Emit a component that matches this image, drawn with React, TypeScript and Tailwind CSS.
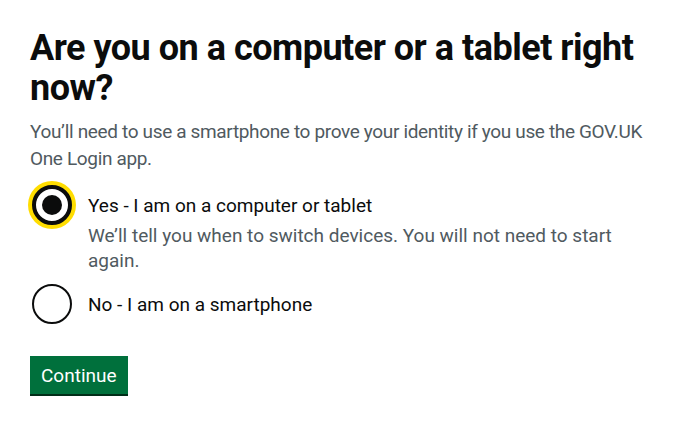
export default function App() {
  return (
    <div className="min-h-screen bg-white text-[#0b0c0c] [font-family:Roboto,'Liberation_Sans',sans-serif]">
      <div className="pl-[30px] pr-[30px] pt-[28px]">
        <h1 className="m-0 text-[36px] leading-[40px] font-bold tracking-[-0.5px]">
          Are you on a computer or a tablet right now?
        </h1>
        <p className="mt-[10px] text-[19px] leading-[27px] tracking-[-0.35px] text-[#505a5f]">
          You’ll need to use a smartphone to prove your identity if you use the GOV.UK One Login app.
        </p>
        <div className="mt-[13px] flex flex-col gap-[11px]">
          <div className="flex gap-[16px] pl-[2px]">
            <div className="flex h-[40px] w-[40px] shrink-0 items-center justify-center rounded-full border-[4px] border-[#0b0c0c] bg-white shadow-[0_0_0_4px_#ffdd00]">
              <div className="h-[20px] w-[20px] rounded-full bg-[#0b0c0c]" />
            </div>
            <div className="pt-[8px]">
              <div className="text-[19px] leading-[25px]">Yes - I am on a computer or tablet</div>
              <div className="mt-[5px] text-[19px] leading-[25px] text-[#505a5f]">
                We’ll tell you when to switch devices. You will not need to start again.
              </div>
            </div>
          </div>
          <div className="flex items-center gap-[16px] pl-[2px]">
            <div className="h-[40px] w-[40px] shrink-0 rounded-full border-2 border-[#0b0c0c] bg-white" />
            <div className="text-[19px] leading-[25px]">No - I am on a smartphone</div>
          </div>
        </div>
        <button className="mt-[32px] bg-[#00703c] px-[11px] pb-[7px] pt-[8px] text-[19px] leading-[23px] text-white shadow-[0_2px_0_#002d18]">
          Continue
        </button>
      </div>
    </div>
  );
}
